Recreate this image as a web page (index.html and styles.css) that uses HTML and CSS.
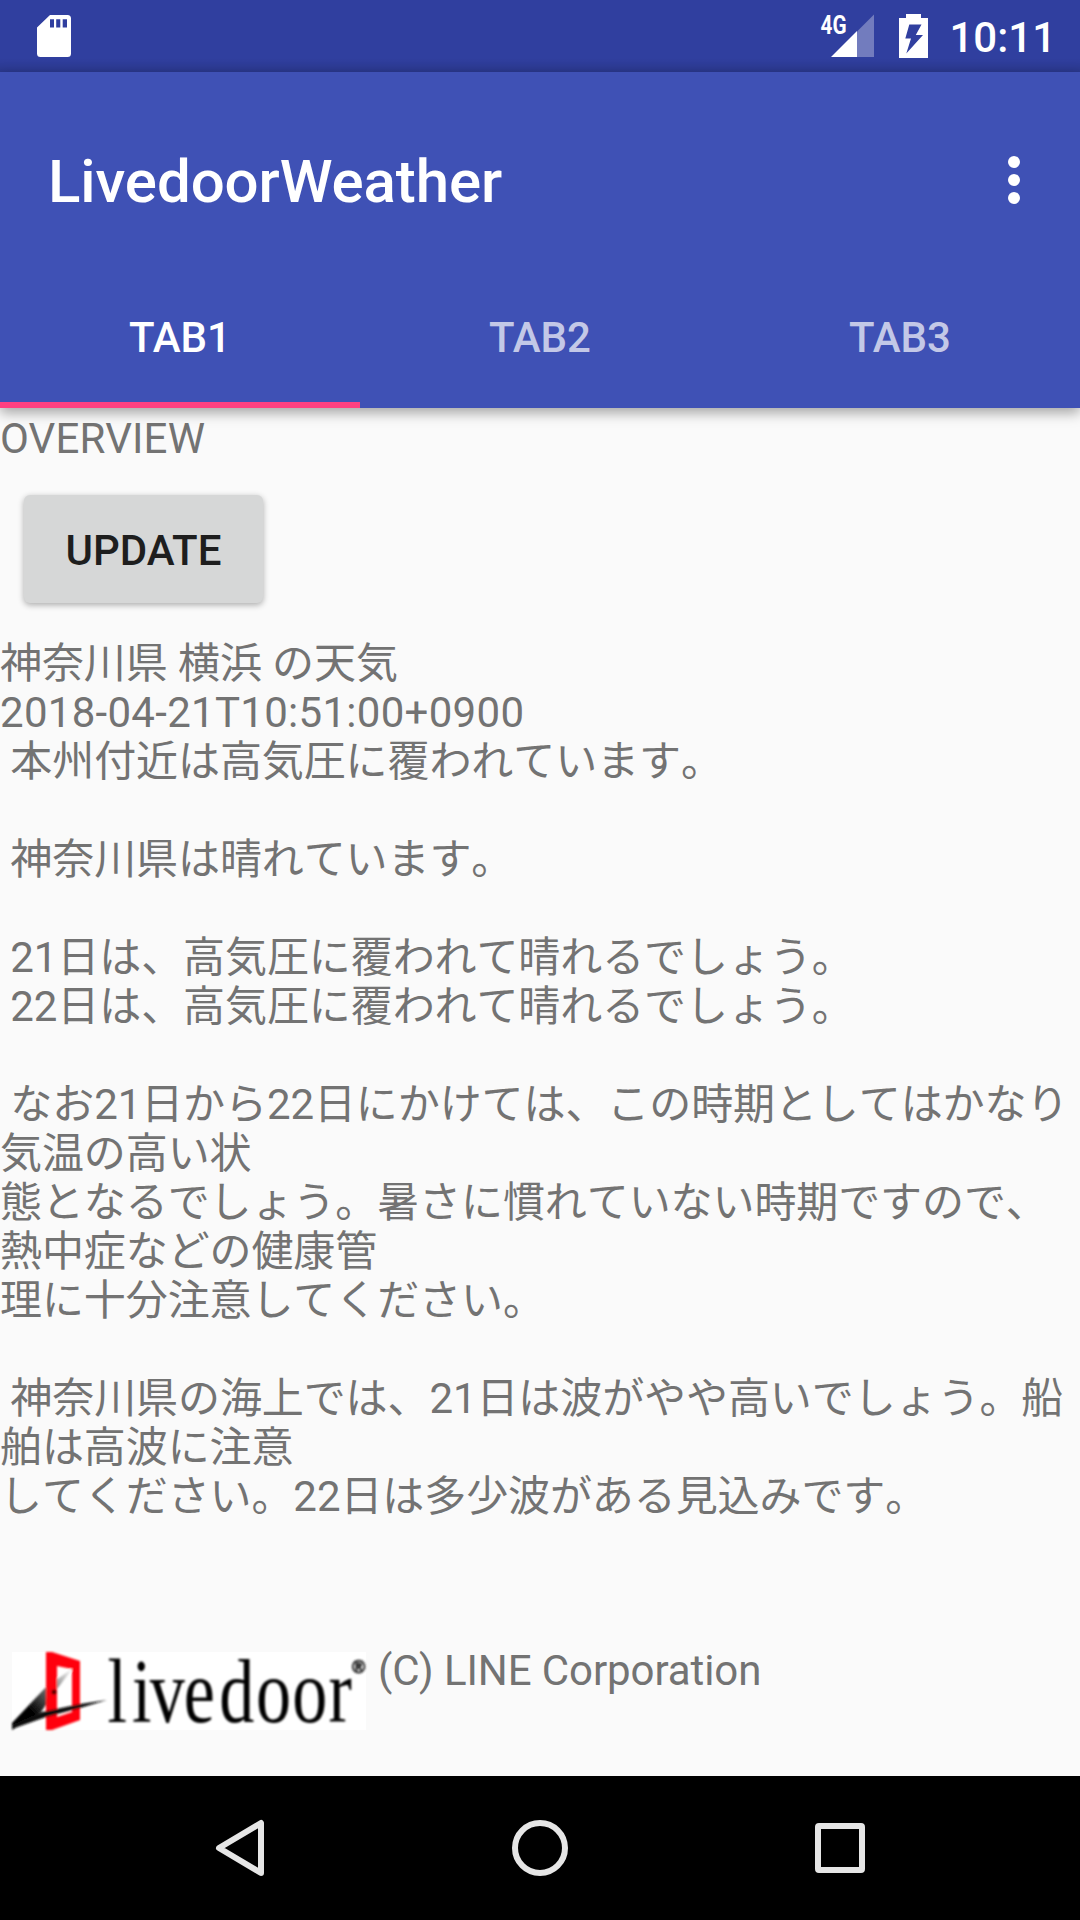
FILE: index.html
```html
<!DOCTYPE html>
<html lang="ja">
<head>
<meta charset="utf-8">
<title>LivedoorWeather</title>
<link rel="stylesheet" href="styles.css">
</head>
<body>
<div class="screen">
  <div class="status-bar">
    <svg class="icon-sd" width="34" height="42" viewBox="0 0 34 42"><path fill="#fff" fill-rule="evenodd" d="M13 0H30.500Q34 0 34 3.500V38.500Q34 42 30.500 42H3.500Q0 42 0 38.500V12.500ZM13 4.200V12.500H17V4.200ZM19.200 4.200V12.500H23.300V4.200ZM25.700 4.200V12.500H30V4.200Z"/></svg>
    <div class="status-right">
      <svg class="icon-signal" width="56" height="44" viewBox="-2 0 56 44">
        <path fill="#fff" fill-opacity=".32" d="M37 17.500L54 .5V43H37Z"/>
        <path fill="#fff" d="M11 43L37 17V43Z"/>
        <text class="network" x="0.500" y="19.500" textLength="26" lengthAdjust="spacingAndGlyphs">4G</text>
      </svg>
      <svg class="icon-battery" width="29" height="44" viewBox="0 0 29 44"><path fill="#fff" fill-rule="evenodd" d="M7 0H22V4H29V44H0V4H7ZM10.300 10.500L6.300 24.500H12L7.300 39.500L24 21H16.800L22.500 10.500Z"/></svg>
      <span class="clock">10:11</span>
    </div>
  </div>
  <header class="app-bar">
    <div class="toolbar">
      <h1 class="title">LivedoorWeather</h1>
      <svg width="12" height="48" viewBox="0 0 12 48" fill="#fff"><circle cx="6" cy="6" r="6"/><circle cx="6" cy="24" r="6"/><circle cx="6" cy="42" r="6"/></svg>
    </div>
    <nav class="tabs">
      <div class="tab tab-active">TAB1</div>
      <div class="tab">TAB2</div>
      <div class="tab">TAB3</div>
    </nav>
  </header>
  <main class="content">
    <div class="overview">OVERVIEW</div>
    <button class="update">UPDATE</button>
    <div class="forecast">神奈川県 横浜 の天気
<span class="timestamp">2018-04-21T10:51:00+0900</span>
 本州付近は高気圧に覆われています。

 神奈川県は晴れています。

 21日は、高気圧に覆われて晴れるでしょう。
 22日は、高気圧に覆われて晴れるでしょう。

 なお21日から22日にかけては、この時期としてはかなり
気温の高い状
態となるでしょう。暑さに慣れていない時期ですので、
熱中症などの健康管
理に十分注意してください。

 神奈川県の海上では、21日は波がやや高いでしょう。船
舶は高波に注意
してください。22日は多少波がある見込みです。</div>
    <div class="credit">
      <svg class="logo" width="354" height="78" viewBox="0 0 354 78">
        <defs>
          <linearGradient id="beam" x1="0" y1="1" x2="1" y2="0"><stop offset=".3" stop-color="#000"/><stop offset=".65" stop-color="#777"/><stop offset="1" stop-color="#fff"/></linearGradient>
          <filter id="soft"><feGaussianBlur stdDeviation="0.900"/></filter>
        </defs>
        <rect width="354" height="78" fill="#fff"/>
        <g filter="url(#soft)">
          <path fill="url(#beam)" d="M0 71L34 35L61 16L45 37L29 60L0 78Z"/>
          <path fill="#ff000c" fill-rule="evenodd" d="M34 0H40L68 9V68L40 78H34ZM45 14V65L60 60V17Z"/>
          <path fill="#111" d="M0 73L30 60L68 52L95 48L68 56L34 65L0 77Z"/>
          <circle cx="42" cy="40" r="2.500" fill="#500"/>
          <g transform="scale(.77 1)"><text class="wordmark" y="70" x="124 156 179 223 269 317 364 411">livedoor</text></g>
          <text class="registered" x="340" y="21">®</text>
        </g>
      </svg>
      <span class="copyright">(C) LINE Corporation</span>
    </div>
  </main>
  <footer class="nav-bar">
    <svg width="56" height="56" viewBox="0 0 56 56"><path d="M7 28L49 3V53Z"/></svg>
    <svg width="56" height="56" viewBox="0 0 56 56"><circle cx="28" cy="28" r="25"/></svg>
    <svg width="56" height="56" viewBox="0 0 56 56"><rect x="6" y="6" width="44" height="44" rx="1"/></svg>
  </footer>
</div>
</body>
</html>
```
FILE: styles.css
```css
* { box-sizing: border-box; }
body {
  margin: 0;
  background: #fafafa;
  font-family: Roboto, "Noto Sans CJK JP", sans-serif;
  font-size: 42px;
  line-height: 49px;
  color: #737373;
}
svg { display: block; flex: none; overflow: visible; }
.screen {
  width: 1080px;
  height: 1920px;
  display: flex;
  flex-direction: column;
  overflow: hidden;
}
.status-bar {
  height: 72px;
  flex: none;
  display: flex;
  justify-content: space-between;
  padding: 0 24px 0 37px;
  background: linear-gradient(rgba(0,0,0,0) 58px, rgba(0,0,0,.06) 66px, rgba(0,0,0,.12) 72px), #303f9f;
  color: #fff;
}
.icon-sd { margin-top: 15px; }
.status-right { display: flex; align-items: flex-start; }
.icon-signal { margin: 14px 25px 0 0; }
.icon-battery { margin: 14px 21px 0 0; }
.network { font-size: 25px; font-weight: 700; fill: #fff; }
.clock { margin-top: 13px; font-weight: 500; }
.app-bar {
  height: 336px;
  flex: none;
  position: relative;
  background: #3f51b5;
  color: #fff;
  box-shadow: 0 5px 12px rgba(0,0,0,.34);
}
.toolbar {
  height: 192px;
  padding: 24px 60px 0 48px;
  display: flex;
  align-items: center;
  justify-content: space-between;
}
.title { margin: 4px 0 0; font-size: 60px; line-height: 70px; font-weight: 500; letter-spacing: -.08px; }
.tabs { display: grid; grid-template-columns: repeat(3, 1fr); height: 144px; }
.tab {
  padding-top: 49px;
  text-align: center;
  font-weight: 500;
  color: rgba(255,255,255,.7);
  border-bottom: 6px solid transparent;
}
.tab-active { color: #fff; border-bottom-color: #ff4081; }
.content { flex: 1; padding-top: 6px; }
.overview { letter-spacing: .15px; }
.update {
  display: block;
  width: 240px;
  height: 108px;
  margin: 32px 0 36px 24px;
  padding: 2px 0 0;
  border: 0;
  border-radius: 6px;
  background: #d6d7d7;
  color: #1e1e1e;
  font: 500 42px/49px Roboto, sans-serif;
  box-shadow: 0 2px 6px rgba(0,0,0,.32);
}
.forecast {
  white-space: pre;
  font-kerning: none;
  letter-spacing: -.09px;
  text-autospace: no-autospace;
  text-spacing-trim: space-all;
}
.timestamp { letter-spacing: .29px; }
.credit { display: flex; align-items: flex-start; gap: 12px; padding: 125px 0 0 12px; }
.copyright { letter-spacing: -.08px; }
.logo { margin-top: 6px; }
.wordmark { font-family: "Liberation Serif", serif; font-size: 91px; fill: #000; }
.registered { font-family: "Liberation Sans", sans-serif; font-size: 18px; font-weight: 700; fill: #222; stroke: #222; stroke-width: .8; }
.nav-bar {
  height: 144px;
  flex: none;
  display: flex;
  align-items: center;
  justify-content: center;
  gap: 244px;
  background: #000;
  fill: none;
  stroke: #e6e6e6;
  stroke-width: 6;
  stroke-linejoin: round;
}
.update { width: 239px; }
```
